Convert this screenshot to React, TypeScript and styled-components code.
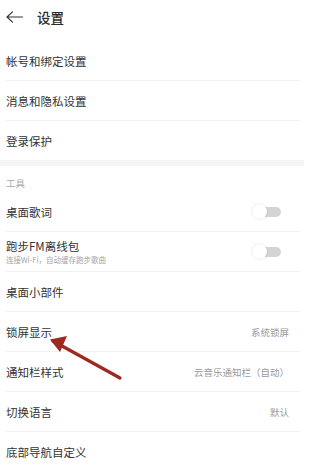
import React, { FC } from 'react';
import styled, { createGlobalStyle } from 'styled-components';

const GlobalStyle = createGlobalStyle`
  html, body {
    margin: 0;
    padding: 0;
    background: #ffffff;
  }
  body {
    font-family: "Noto Sans CJK SC", "Noto Sans", sans-serif;
    color: #333333;
  }
`;

const Page = styled.div`
  position: relative;
  width: 304px;
  height: 468px;
  overflow: hidden;
  background: #ffffff;
`;

const Header = styled.div`
  display: flex;
  align-items: center;
  height: 33px;
  padding: 0 0 8px 6px;
  gap: 14px;
`;

const Title = styled.h1`
  margin: 0;
  font-size: 13.5px;
  font-weight: 500;
  color: #2b2b2b;
  line-height: 16px;
`;

const Group = styled.div`
  display: flex;
  flex-direction: column;
`;

const Row = styled.div<{ $last?: boolean }>`
  display: flex;
  align-items: center;
  justify-content: space-between;
  height: ${({ $last }) => ($last ? '39px' : '39px')};
  margin: 0 4px 0 6px;
  border-bottom: ${({ $last }) => ($last ? 'none' : '1px solid #f0f0f0')};
`;

const TextCol = styled.div`
  display: flex;
  flex-direction: column;
`;

const Label = styled.span`
  font-size: 11.5px;
  line-height: 16px;
  color: #333333;
`;

const Sub = styled.span`
  font-size: 7.5px;
  line-height: 12px;
  color: #a5a5a5;
`;

const Value = styled.span`
  font-size: 9.5px;
  color: #9a9a9a;
  margin-right: 11px;
`;

const Band = styled.div`
  height: 6px;
  background: #f4f4f6;
`;

const SectionLabel = styled.div`
  font-size: 9.5px;
  line-height: 12px;
  color: #a8a8a8;
  padding: 11px 0 3px 6px;
`;

const Track = styled.div`
  position: relative;
  width: 29px;
  height: 15px;
  margin-right: 19px;
  display: flex;
  align-items: center;
`;

const TrackBar = styled.div`
  position: absolute;
  left: 6px;
  right: 0;
  height: 10px;
  border-radius: 5px;
  background: #d4d4d6;
`;

const Knob = styled.div`
  position: absolute;
  left: 0;
  width: 15px;
  height: 15px;
  border-radius: 50%;
  background: #ffffff;
  box-shadow: 0 0 2px rgba(0, 0, 0, 0.18);
`;

const Annotation = styled.svg`
  position: absolute;
  left: 0;
  top: 0;
  pointer-events: none;
`;

const Toggle: FC = () => (
  <Track>
    <TrackBar />
    <Knob />
  </Track>
);

const BackIcon: FC = () => (
  <svg width="17" height="12" viewBox="0 0 17 12" fill="none">
    <path d="M16.5 6H1M6.5 0.8L1 6L6.5 11.2" stroke="#333" strokeWidth="1.1" strokeLinecap="round" strokeLinejoin="round" />
  </svg>
);

type Item = { label: string; sub?: string; value?: string; toggle?: boolean };

const accountItems: Item[] = [
  { label: '帐号和绑定设置' },
  { label: '消息和隐私设置' },
  { label: '登录保护' },
];

const toolItems: Item[] = [
  { label: '桌面歌词', toggle: true },
  { label: '跑步FM离线包', sub: '连接Wi-Fi，自动缓存跑步歌曲', toggle: true },
  { label: '桌面小部件' },
  { label: '锁屏显示', value: '系统锁屏' },
  { label: '通知栏样式', value: '云音乐通知栏（自动）' },
  { label: '切换语言', value: '默认' },
  { label: '底部导航自定义' },
];

const renderRows = (items: Item[], lastBorder: boolean) =>
  items.map((it, i) => (
    <Row key={it.label} $last={!lastBorder && i === items.length - 1}>
      <TextCol>
        <Label>{it.label}</Label>
        {it.sub && <Sub>{it.sub}</Sub>}
      </TextCol>
      {it.toggle && <Toggle />}
      {it.value && <Value>{it.value}</Value>}
    </Row>
  ));

const App: FC = () => (
  <Page>
    <GlobalStyle />
    <Header>
      <BackIcon />
      <Title>设置</Title>
    </Header>
    <Group>{renderRows(accountItems, false)}</Group>
    <Band />
    <SectionLabel>工具</SectionLabel>
    <Group>{renderRows(toolItems, false)}</Group>
    <Annotation width="304" height="468" viewBox="0 0 304 468">
      <path d="M120 378 L53 341" stroke="#9c2a20" strokeWidth="3.2" strokeLinecap="round" />
      <path d="M50 339.5 L67 336 L60 352 Z" fill="#9c2a20" />
    </Annotation>
  </Page>
);

export default App;
